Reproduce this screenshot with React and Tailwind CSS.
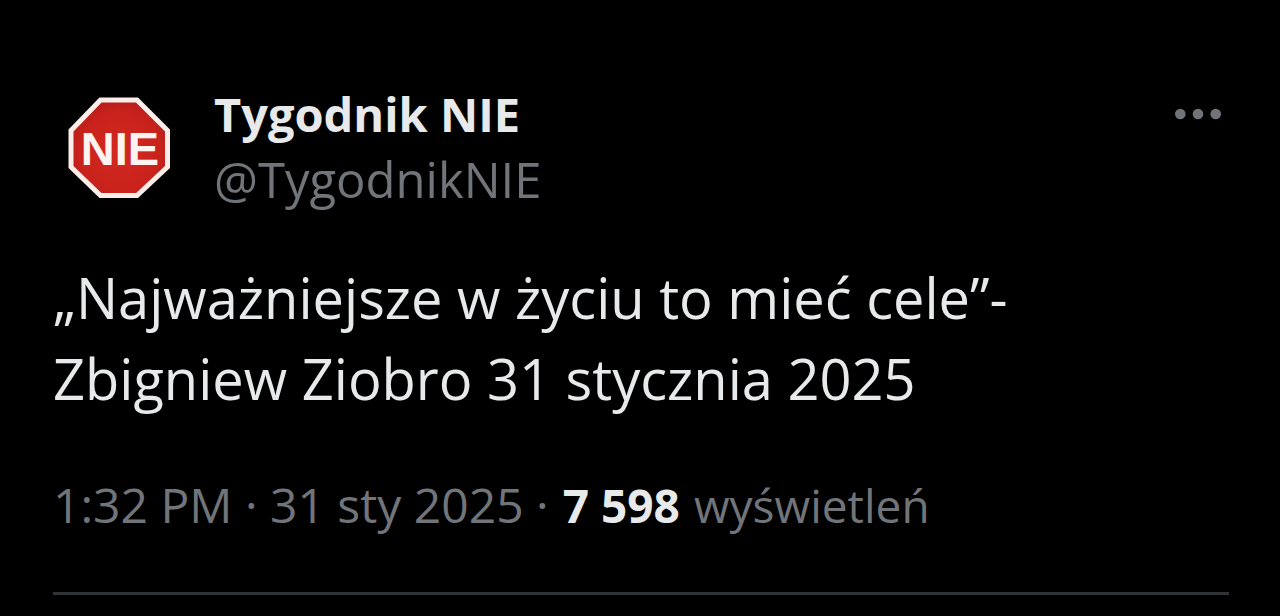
function Avatar() {
  return (
    <svg viewBox="0 0 132 132" className="size-[132px] shrink-0 rounded-full" role="img" aria-label="Tygodnik NIE">
      <defs>
        <radialGradient id="sign" cx="50%" cy="55%" r="60%">
          <stop offset="0" stopColor="#d22a20" />
          <stop offset="0.7" stopColor="#c9221c" />
          <stop offset="1" stopColor="#b01c1a" />
        </radialGradient>
      </defs>
      <path
        d="M47.5 18H84L114.500 48.500V85L84 113.500H47.500L18 85V48.500Z"
        fill="url(#sign)"
        stroke="#fbeeea"
        strokeWidth="5"
      />
      <text
        x="67"
        y="82.500"
        textAnchor="middle"
        fill="#fdf3f0"
        fontSize="47"
        fontWeight="700"
        fontFamily="'Liberation Sans', sans-serif"
      >
        NIE
      </text>
    </svg>
  );
}

function MoreIcon() {
  return (
    <svg viewBox="0 0 46 12" className="h-3 w-[46px]" fill="currentColor" aria-hidden="true">
      <circle cx="5.300" cy="6" r="5.300" />
      <circle cx="23" cy="6" r="5.300" />
      <circle cx="40.700" cy="6" r="5.300" />
    </svg>
  );
}

export default function App() {
  return (
    <main className="min-h-screen bg-black pt-[82px] pr-[51px] pl-[53px] font-['Open_Sans',sans-serif] font-[450] text-[#e7e9ea]">
      <article>
        <header className="flex items-start">
          <Avatar />
          <div className="ml-[29px] min-w-0 flex-1">
            <h1 className="text-[47px] leading-[65px] font-bold">Tygodnik NIE</h1>
            <a href="#profile" className="block text-[49px] leading-[65px] text-[#717479]">
              @TygodnikNIE
            </a>
          </div>
          <button type="button" aria-label="Więcej" className="mt-[26px] mr-2 text-[#717479]">
            <MoreIcon />
          </button>
        </header>

        <p className="mt-[43px] text-[56px] leading-[81px]">
          „Najważniejsze w życiu to mieć cele”-
          <br />
          Zbigniew Ziobro 31 stycznia 2025
        </p>

        <div className="mt-[54px] flex flex-wrap items-baseline gap-x-3.5 border-b-[3px] border-[#2f3336] pb-[55px] text-[46px] leading-[64px] text-[#717479]">
          <time dateTime="2025-01-31T13:32" className="text-[48px]">
            1:32 PM · 31 sty 2025 ·
          </time>
          <strong className="font-bold text-[#e7e9ea]">7 598</strong>
          <span>wyświetleń</span>
        </div>
      </article>
    </main>
  );
}
